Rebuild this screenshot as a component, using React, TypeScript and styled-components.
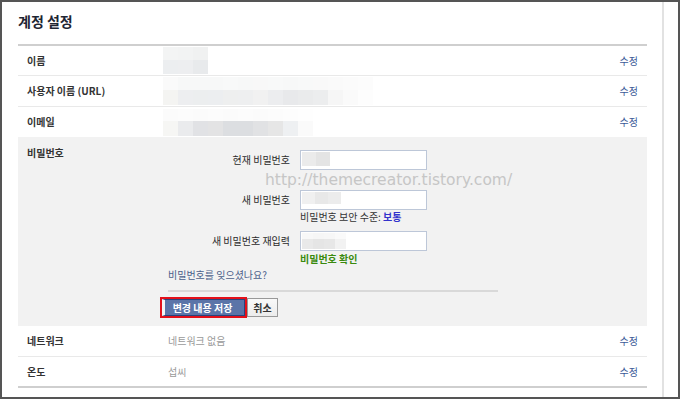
import * as React from 'react';
import styled, { createGlobalStyle } from 'styled-components';

const GlobalStyle = createGlobalStyle`
  html, body { margin: 0; padding: 0; background: #fff; }
  * { box-sizing: border-box; }
`;

const Frame = styled.div`
  position: relative;
  width: 680px;
  height: 399px;
  border: 2px solid #555;
  display: flex;
  overflow: hidden;
  font-family: "Noto Sans CJK KR", "Liberation Sans", sans-serif;
  color: #333;
  background: #fff;
`;

const Main = styled.div`
  flex: 1;
  padding: 0 15px 0 16px;
  border-right: 2px solid #e2e2e2;
`;

const Gutter = styled.div`
  width: 14px;
`;

const Title = styled.h1`
  margin: 0;
  height: 42px;
  padding-bottom: 4px;
  display: flex;
  align-items: center;
  font-size: 14px;
  font-weight: 700;
  color: #1e2533;
`;

const Table = styled.div`
  border-top: 2px solid #cfcfcf;
  border-bottom: 2px solid #cfcfcf;
`;

const Row = styled.div<{ $h: number; $line?: boolean }>`
  display: grid;
  grid-template-columns: 145px 1fr auto;
  align-items: center;
  height: ${p => p.$h}px;
  border-bottom: ${p => (p.$line ? '1px solid #e9e9e9' : 'none')};
`;

const Label = styled.div`
  padding-left: 9px;
  font-size: 10px;
  font-weight: 700;
  line-height: 14px;
  color: #333;
`;

const Value = styled.div<{ $muted?: boolean }>`
  padding-left: 5px;
  font-size: 10px;
  line-height: 14px;
  color: ${p => (p.$muted ? '#9a9a9a' : '#333')};
`;

const Edit = styled.a`
  padding-right: 9px;
  font-size: 10px;
  line-height: 14px;
  color: #3b5998;
  text-decoration: none;
`;

const MosaicBox = styled.div<{ $ml?: number }>`
  display: flex;
  flex-direction: column;
  margin-left: ${p => p.$ml ?? 0}px;
`;

const MosaicRow = styled.div`
  display: flex;
`;

const Cell = styled.div<{ $w: number; $h: number; $c: string }>`
  width: ${p => p.$w}px;
  height: ${p => p.$h}px;
  background: ${p => p.$c};
`;

const PasswordSection = styled.div`
  display: grid;
  grid-template-columns: 145px 1fr;
  background: #f2f2f2;
  padding: 9px 0 8px;
`;

const SectionLabel = styled(Label)`
  align-self: start;
`;

const Form = styled.div`
  padding: 4px 0 0 5px;
  display: flex;
  flex-direction: column;
`;

const FieldRow = styled.div<{ $mb?: number }>`
  display: grid;
  grid-template-columns: 122px 127px;
  column-gap: 10px;
  align-items: center;
  margin-bottom: ${p => p.$mb ?? 0}px;
`;

const FieldLabel = styled.label`
  text-align: right;
  font-size: 10px;
  line-height: 14px;
  color: #2b2b2b;
`;

const InputBox = styled.div`
  height: 20px;
  border: 1px solid #bdc7d8;
  background: #fff;
  padding: 1px 0 0 1px;
`;

const Hint = styled.div<{ $tone?: 'ok'; $mt?: number; $mb?: number }>`
  margin: ${p => p.$mt ?? 0}px 0 ${p => p.$mb ?? 0}px 132px;
  font-size: 10px;
  line-height: 14px;
  color: ${p => (p.$tone === 'ok' ? '#3a8a0e' : '#333')};
  font-weight: ${p => (p.$tone === 'ok' ? 700 : 400)};
`;

const Strength = styled.span`
  color: #3333cc;
  font-weight: 700;
`;

const Forgot = styled.a`
  margin-top: 2px;
  font-size: 10px;
  line-height: 14px;
  color: #4b5f8a;
  text-decoration: none;
`;

const Divider = styled.div`
  margin-top: 8px;
  width: 330px;
  height: 2px;
  background: #d9d9d9;
`;

const ButtonRow = styled.div`
  margin: 5px 0 0 -8px;
  display: flex;
  align-items: center;
`;

const Highlight = styled.div`
  border: 2px solid #e3101a;
  height: 21px;
  width: 87px;
  display: flex;
`;

const SaveButton = styled.button`
  flex: 1;
  height: 17px;
  margin: 0;
  padding: 0 4px 0 0;
  border: 1px solid #29447e;
  border-left: 3px solid #f4f4f4;
  background: #5b74a8;
  color: #fff;
  font-family: inherit;
  font-size: 10px;
  font-weight: 700;
  line-height: 15px;
  text-align: center;
`;

const CancelButton = styled.button`
  width: 31px;
  height: 19px;
  margin: 0;
  padding: 0;
  border: 1px solid #999;
  background: linear-gradient(#f9f9f9, #ececec);
  color: #333;
  font-family: inherit;
  font-size: 10px;
  font-weight: 700;
  line-height: 17px;
`;

const Watermark = styled.div`
  position: absolute;
  left: 263px;
  top: 169px;
  font-family: "DejaVu Sans", Verdana, sans-serif;
  font-size: 15.5px;
  line-height: 18px;
  color: #c6c6c6;
  pointer-events: none;
  white-space: nowrap;
`;

type MosaicProps = { rows: string[][]; w: number; h: number[]; ml?: number };

const Mosaic: React.FC<MosaicProps> = ({ rows, w, h, ml }) => (
  <MosaicBox $ml={ml}>
    {rows.map((r, i) => (
      <MosaicRow key={i}>
        {r.map((c, j) => (
          <Cell key={j} $w={w} $h={h[i]} $c={c} />
        ))}
      </MosaicRow>
    ))}
  </MosaicBox>
);

const nameCells = [
  ['#f3f4f4', '#f2f3f3', '#f0f1f1'],
  ['#eceef0', '#edeef0', '#e8eaec'],
];
const urlCells = [
  ['#fafafa', '#f7f8f8', '#f7f8f8', '#f7f8f8', '#f8f9f9', '#f7f8f8', '#f8f8f8', '#f8f9f9', '#f7f8f8', '#f8f9f9', '#f9f9f9', '#fafafa', '#fbfbfb', '#fcfcfc'],
  ['#f4f4f2', '#edeef0', '#eceeef', '#eceef0', '#eeefef', '#eeeff0', '#f1f1f1', '#ecedef', '#e8e9eb', '#eaebec', '#ecedee', '#f6f6f6', '#fafafa', '#fdfdfd'],
];
const mailCells = [
  ['#fbfbfb', '#fcfcfc', '#fbfbfb', '#fcfcfc', '#fbfbfb', '#fcfcfc', '#fbfbfb', '#fcfcfc', '#fdfdfd', '#fefefe'],
  ['#f6f6f4', '#eaebed', '#e1e2e5', '#e3e3e4', '#dcdee1', '#dcdee1', '#e1e2e4', '#e6e6e6', '#eef0f2', '#fafafa'],
];
const pw1 = [['#ebebeb', '#e4e4e4']];
const pw2 = [['#f0f0f0', '#e8e8e8', '#ececec']];
const pw3 = [
  ['#f8f8f8', '#f6f6f6', '#f7f7f7', '#fafafa'],
  ['#e9e9e9', '#e5e5e5', '#e7e7e7', '#f2f2f2'],
];

export default function App() {
  return (
    <>
      <GlobalStyle />
      <Frame>
        <Main>
          <Title>계정 설정</Title>
          <Table>
            <Row $h={30} $line>
              <Label>이름</Label>
              <Mosaic rows={nameCells} w={15} h={[13, 14]} />
              <Edit href="#">수정</Edit>
            </Row>
            <Row $h={31} $line>
              <Label>사용자 이름 (URL)</Label>
              <Mosaic rows={urlCells} w={15} h={[13, 15]} />
              <Edit href="#">수정</Edit>
            </Row>
            <Row $h={30}>
              <Label>이메일</Label>
              <Mosaic rows={mailCells} w={15} h={[12, 15]} />
              <Edit href="#">수정</Edit>
            </Row>

            <PasswordSection>
              <SectionLabel>비밀번호</SectionLabel>
              <Form>
                <FieldRow $mb={20}>
                  <FieldLabel>현재 비밀번호</FieldLabel>
                  <InputBox>
                    <Mosaic rows={pw1} w={14} h={[14]} />
                  </InputBox>
                </FieldRow>
                <FieldRow>
                  <FieldLabel>새 비밀번호</FieldLabel>
                  <InputBox>
                    <Mosaic rows={pw2} w={13} h={[12]} />
                  </InputBox>
                </FieldRow>
                <Hint $mb={7}>
                  비밀번호 보안 수준: <Strength>보통</Strength>
                </Hint>
                <FieldRow>
                  <FieldLabel>새 비밀번호 재입력</FieldLabel>
                  <InputBox>
                    <Mosaic rows={pw3} w={11} h={[6, 10]} />
                  </InputBox>
                </FieldRow>
                <Hint $tone="ok" $mt={1}>비밀번호 확인</Hint>
                <Forgot href="#">비밀번호를 잊으셨나요?</Forgot>
                <Divider />
                <ButtonRow>
                  <Highlight>
                    <SaveButton type="button">변경 내용 저장</SaveButton>
                  </Highlight>
                  <CancelButton type="button">취소</CancelButton>
                </ButtonRow>
              </Form>
            </PasswordSection>

            <Row $h={31} $line>
              <Label>네트워크</Label>
              <Value $muted>네트워크 없음</Value>
              <Edit href="#">수정</Edit>
            </Row>
            <Row $h={29}>
              <Label>온도</Label>
              <Value $muted>섭씨</Value>
              <Edit href="#">수정</Edit>
            </Row>
          </Table>
        </Main>
        <Gutter />
        <Watermark>http://themecreator.tistory.com/</Watermark>
      </Frame>
    </>
  );
}
